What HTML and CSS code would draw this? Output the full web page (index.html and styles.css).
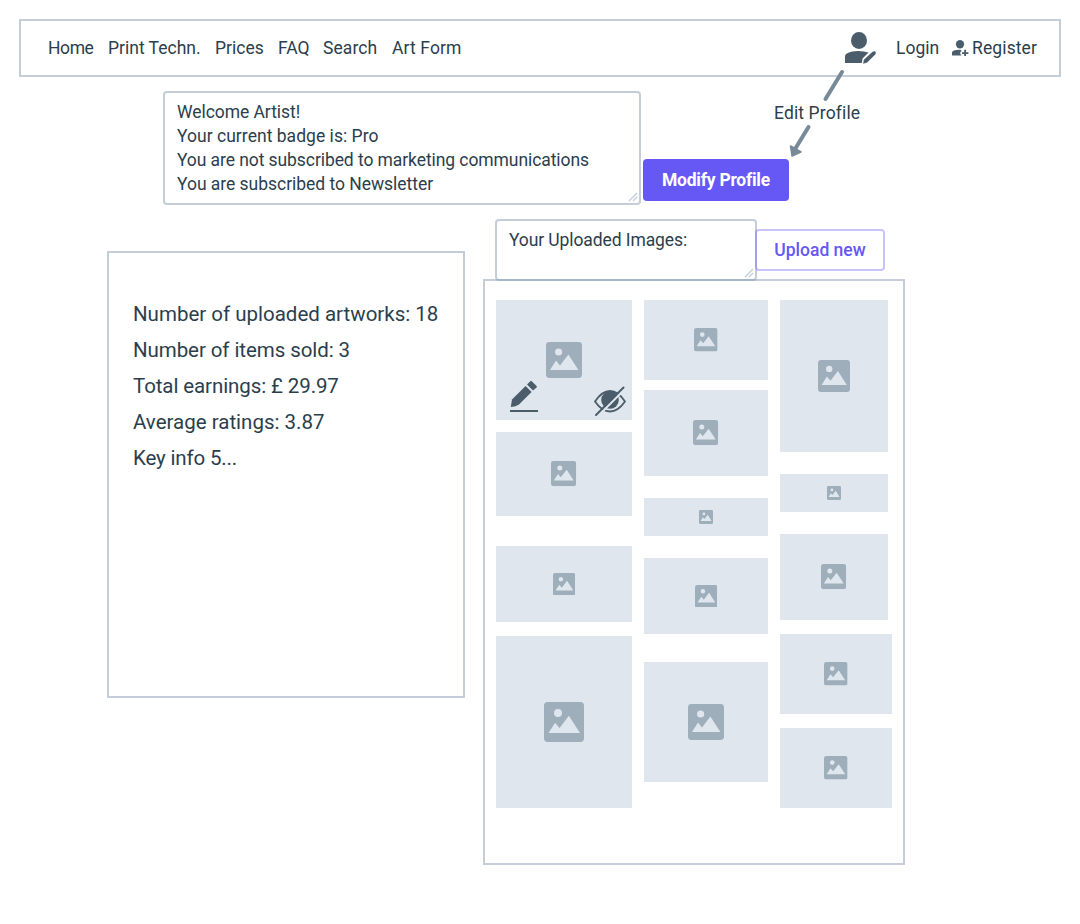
FILE: index.html
```html
<!DOCTYPE html>
<html lang="en">
<head>
<meta charset="utf-8">
<title>Artist Profile</title>
<link rel="stylesheet" href="styles.css">
</head>
<body>
<svg class="defs" aria-hidden="true">
  <symbol id="picture" viewBox="0 0 18 18">
    <path fill-rule="evenodd" d="M1.700 0H16.300A1.700 1.700 0 0 1 18 1.700V16.300A1.700 1.700 0 0 1 16.300 18H1.700A1.700 1.700 0 0 1 0 16.300V1.700A1.700 1.700 0 0 1 1.700 0ZM2 14H16.2L11.2 6.2L7 11.7L5 9.3ZM6.3 3.2A1.8 1.8 0 1 0 6.3 6.8A1.8 1.8 0 1 0 6.3 3.2Z"/>
  </symbol>
</svg>
<header class="topbar">
  <nav class="nav">
    <a class="w-home">Home</a><a class="w-print">Print Techn.</a><a class="w-prices">Prices</a><a class="w-faq">FAQ</a><a class="w-search">Search</a><a class="w-art">Art Form</a>
  </nav>
  <div class="account">
    <svg class="edit-user" viewBox="0 0 32 33"><ellipse cx="14" cy="8.5" rx="8" ry="8.5"/><path d="M0 31V24.500Q0 19.500 13.500 19Q19 19 23.500 20.600L17.600 26.500L16.800 31Z"/><path d="M18.200 31.800L18.800 27.800L27.300 20Q28.600 18.800 30 19.300Q31.600 20.500 30.500 22.200L22.200 30.500Z"/></svg>
    <a class="login">Login</a>
    <svg class="add-user" viewBox="0 0 17 16"><ellipse cx="8" cy="4.200" rx="4.100" ry="4.200"/><path d="M0 15.500V12.500Q.5 9.800 7 9.800Q8.500 9.800 9.300 10.100V11.700H8.300V14.500H9.300V15.500Z"/><path d="M12.200 9.800H14V12.200H16.400V14H14V16H12.200V14H10V12.200H12.200Z"/></svg>
    <a class="register">Register</a>
  </div>
</header>
<div class="callout">
  <svg class="arrow" viewBox="0 0 58 92"><path class="shaft" d="M53 3L36.500 30M19.500 58L5.500 81"/><path class="head" d="M1.500 77L12 83L3 87Z"/></svg>
  <span class="callout-label">Edit Profile</span>
</div>
<section class="welcome">
  <div class="textbox welcome-text">
    <p class="l1">Welcome Artist!</p><p class="l2">Your current badge is: Pro</p><p class="l3">You are not subscribed to marketing communications</p><p class="l4">You are subscribed to Newsletter</p>
    <svg class="grip" viewBox="0 0 10 10"><path d="M1 9L9 1M5 9L9 5"/></svg>
  </div>
  <button class="primary"><span>Modify Profile</span></button>
</section>
<main class="content">
  <section class="stats">
    <p class="s1">Number of uploaded artworks: 18</p><p class="s2">Number of items sold: 3</p><p class="s3">Total earnings: £ 29.97</p><p class="s4">Average ratings: 3.87</p><p class="s5">Key info 5...</p>
  </section>
  <section class="uploads">
    <div class="upload-bar">
      <div class="textbox upload-text"><p class="u1">Your Uploaded Images:</p>
        <svg class="grip" viewBox="0 0 10 10"><path d="M1 9L9 1M5 9L9 5"/></svg></div>
      <button class="outline"><span>Upload new</span></button>
    </div>
    <div class="gallery">
      <div class="col c1">
        <div class="tile h120"><svg class="i36"><use href="#picture"/></svg>
          <svg class="pencil" viewBox="0 0 28 32"><path d="M.8 27L2 19.500L15.600 6L21.600 12L9 24.500Q6 26.500 .8 27Z"/><path d="M17 4.600L20.300 1.200Q21 .5 21.700 1.200L26.600 6.100Q27.300 6.800 26.600 7.400L23 10.600Z"/><path d="M0 30H28V32H0Z"/></svg>
          <svg class="hidden-eye" viewBox="0 0 32 30"><path class="lid" d="M1 15.500Q8 5 16 5T31 15.500Q24 25.500 16 25.500T1 15.500Z"/><circle cx="16" cy="14" r="8.800"/><path class="gap" d="M4.500 29.500L31.500 2.500"/><path class="slash" d="M2 29L29.500 1.500"/></svg>
        </div>
        <div class="tile h84"><svg class="i25"><use href="#picture"/></svg></div>
        <div class="tile h76"><svg class="i23"><use href="#picture"/></svg></div>
        <div class="tile h172"><svg class="i40"><use href="#picture"/></svg></div>
      </div>
      <div class="col c2">
        <div class="tile h80"><svg class="i24"><use href="#picture"/></svg></div>
        <div class="tile h86"><svg class="i25"><use href="#picture"/></svg></div>
        <div class="tile h38"><svg class="i14"><use href="#picture"/></svg></div>
        <div class="tile h76"><svg class="i23"><use href="#picture"/></svg></div>
        <div class="tile h120"><svg class="i36"><use href="#picture"/></svg></div>
      </div>
      <div class="col c3">
        <div class="tile h152"><svg class="i32"><use href="#picture"/></svg></div>
        <div class="tile h38"><svg class="i14"><use href="#picture"/></svg></div>
        <div class="tile h86"><svg class="i25"><use href="#picture"/></svg></div>
        <div class="tile h80 wide"><svg class="i24"><use href="#picture"/></svg></div>
        <div class="tile h80 wide"><svg class="i24"><use href="#picture"/></svg></div>
      </div>
    </div>
  </section>
</main>
</body>
</html>
```

FILE: styles.css
```css
* { box-sizing: border-box; }
body { margin: 0; padding: 19px; height: 924px; position: relative; background: #fff; color: #2c3e4c; font: 17.5px/24px Roboto, "Liberation Sans", sans-serif; }
p { margin: 0; white-space: nowrap; }
a, span { white-space: nowrap; }
svg { display: block; flex: none; }
.defs { position: absolute; width: 0; height: 0; }
.topbar { display: flex; align-items: center; justify-content: space-between; height: 58px; border: 2px solid #c3ceda; padding: 0 21px 0 27px; }
.nav { display: flex; }
.account { display: flex; align-items: center; }
.w-home { width: 60px; letter-spacing: -.4px; }
.w-print { width: 107px; }
.w-prices { width: 63px; }
.w-faq { width: 45px; }
.w-search { width: 69px; letter-spacing: .1px; }
.w-art { letter-spacing: .12px; }
.edit-user { width: 32px; height: 33px; fill: #4b5d6b; }
.login { margin-left: 19px; width: 56px; }
.add-user { width: 17px; height: 16px; fill: #4b5d6b; }
.register { margin-left: 3px; width: 66px; letter-spacing: .12px; }
.callout { position: absolute; left: 774px; top: 69px; width: 86px; height: 90px; }
.arrow { position: absolute; left: 15px; top: 0; width: 58px; height: 92px; }
.shaft { fill: none; stroke: #788997; stroke-width: 4; stroke-linecap: round; }
.head { fill: #788997; stroke: #788997; stroke-width: 1.5; stroke-linejoin: round; }
.callout-label { position: absolute; left: 0; top: 32px; letter-spacing: .13px; }
.welcome { display: flex; align-items: flex-end; margin: 14px 0 0 144px; }
.textbox { position: relative; border: 2px solid #c3ceda; border-radius: 4px; padding: 7px 12px; }
.welcome-text { width: 478px; height: 114px; }
.l1 { letter-spacing: -.05px; }
.l2 { letter-spacing: .03px; }
.l3 { letter-spacing: -.08px; }
.l4 { letter-spacing: -.03px; }
.u1 { letter-spacing: -.1px; }
.grip { position: absolute; right: 1px; bottom: 1px; width: 10px; height: 10px; fill: none; stroke: #c3ceda; stroke-width: 1.4; }
button { font: inherit; display: flex; align-items: center; justify-content: center; padding: 0; }
.primary { margin: 0 0 4px 2px; width: 146px; height: 42px; border: 0; border-radius: 4px; background: #6558f5; color: #fff; font-weight: 700; letter-spacing: -.25px; }
.content { display: flex; align-items: flex-start; margin-left: 88px; }
.stats { margin-top: 46px; width: 358px; height: 447px; border: 2px solid #c3ceda; padding: 43px 24px; font-size: 20.5px; line-height: 36px; }
.s2 { letter-spacing: -.08px; }
.s3 { letter-spacing: -.1px; }
.s5 { letter-spacing: -.15px; }
.uploads { margin: 14px 0 0 18px; width: 422px; }
.upload-bar { display: flex; align-items: flex-start; padding-left: 12px; }
.upload-text { width: 262px; height: 62px; }
.outline { margin: 10px 0 0 -2px; width: 130px; height: 42px; border: 2px solid rgba(101,88,245,.36); border-radius: 4px; background: none; color: #6558f5; font-weight: 500; position: relative; }
.gallery { position: relative; display: flex; align-items: flex-start; gap: 12px; margin-top: -2px; height: 586px; border: 2px solid rgba(135,158,181,.5); padding: 19px 11px; }
.col { display: flex; flex-direction: column; }
.c1 { width: 136px; }
.c2 { width: 124px; }
.c3 { width: 108px; }
.tile { position: relative; flex: none; display: flex; align-items: center; justify-content: center; background: #dfe6ed; fill: #9eaebb; }
.wide { width: 112px; }
.h38 { height: 38px; } .h76 { height: 76px; } .h80 { height: 80px; } .h84 { height: 84px; } .h86 { height: 86px; }
.h120 { height: 120px; } .h152 { height: 152px; } .h172 { height: 172px; }
.c1 .h84 { margin-top: 12px; } .c1 .h76 { margin-top: 30px; } .c1 .h172 { margin-top: 14px; }
.c2 .h86 { margin-top: 10px; } .c2 .h38 { margin-top: 22px; } .c2 .h76 { margin-top: 22px; } .c2 .h120 { margin-top: 28px; }
.c3 .h38, .c3 .h86 { margin-top: 22px; } .c3 .h80 { margin-top: 14px; }
.i14 { width: 14px; height: 14px; } .i23 { width: 22.6px; height: 22.6px; } .i24 { width: 23.6px; height: 23.6px; }
.i25 { width: 25.2px; height: 25.2px; } .i32 { width: 32px; height: 32px; } .i36 { width: 36px; height: 36px; } .i40 { width: 40px; height: 40px; }
.pencil { position: absolute; left: 14px; top: 80px; width: 28px; height: 32px; fill: #4b5d6b; }
.hidden-eye { position: absolute; left: 98px; top: 86px; width: 32px; height: 30px; fill: #4b5d6b; }
.lid { fill: none; stroke: #4b5d6b; stroke-width: 1.8; }
.gap { stroke: #dfe6ed; stroke-width: 2.2; }
.slash { stroke: #4b5d6b; stroke-width: 1.9; stroke-linecap: round; }
```
